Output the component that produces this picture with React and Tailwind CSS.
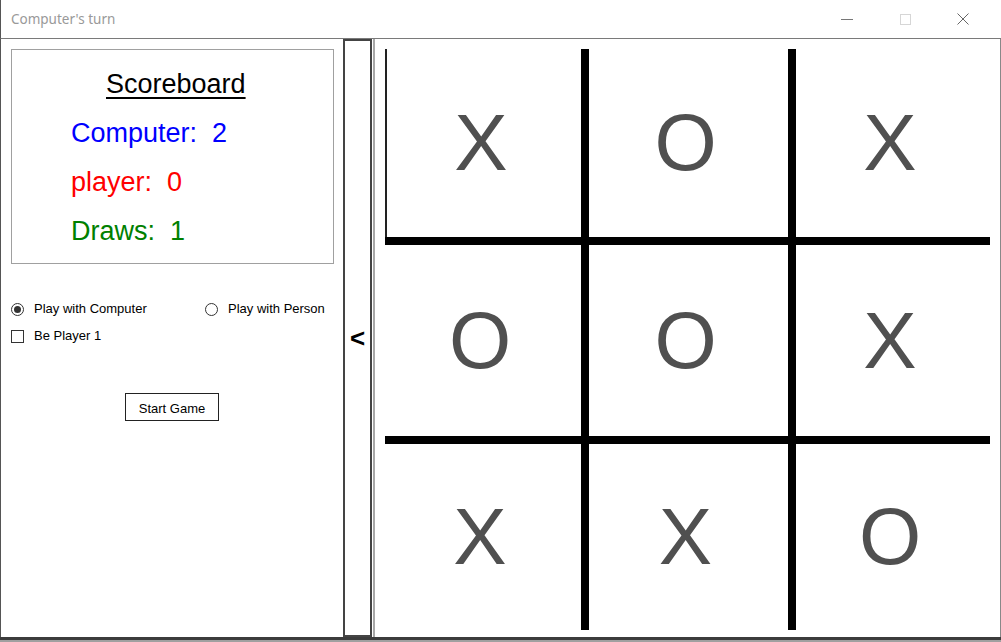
import React from "react";

const board = [
  ["X", "O", "X"],
  ["O", "O", "X"],
  ["X", "X", "O"],
];

const Radio = ({ checked }) => (
  <span className="w-[13px] h-[13px] rounded-full border border-[#333] bg-white flex items-center justify-center shrink-0">
    {checked && <span className="w-[7px] h-[7px] rounded-full bg-[#333]"></span>}
  </span>
);

const App = () => {
  return (
    <div
      className="w-[1001px] h-[642px] bg-white flex flex-col overflow-hidden"
      style={{ fontFamily: '"Liberation Sans", Arial, sans-serif' }}
    >
      {/* title bar */}
      <div className="h-[39px] shrink-0 flex items-center border-b border-[#7a7a7a] border-l border-l-[#555]">
        <span
          className="pl-[10px] text-[13.5px] text-[#999] flex-1"
          style={{ fontFamily: '"Noto Sans", sans-serif' }}
        >
          Computer's turn
        </span>
        <div className="flex items-center h-full">
          <div className="w-[58px] flex justify-center">
            <span className="w-[12px] h-px bg-[#777]"></span>
          </div>
          <div className="w-[58px] flex justify-center">
            <span className="w-[11px] h-[11px] border border-[#d6d6d6]"></span>
          </div>
          <div className="w-[58px] flex justify-center">
            <svg width="12" height="12" viewBox="0 0 12 12">
              <path d="M0.5 0.5 L11.5 11.5 M11.5 0.5 L0.5 11.5" stroke="#666" strokeWidth="1" />
            </svg>
          </div>
          <div className="w-[9px]"></div>
        </div>
      </div>

      {/* main */}
      <div className="flex h-[598px] border-l border-[#555]">
        {/* left panel */}
        <div className="w-[342px] shrink-0 pl-[10px] pt-[10px] pr-[9px]">
          <div className="border border-[#a0a0a0] h-[215px] pt-[19px] flex flex-col gap-[18px] text-[27px] leading-[31px]">
            <div className="pl-[94px] text-black underline decoration-2 underline-offset-[4px]">Scoreboard</div>
            <div className="pl-[59px] text-[#0000ff]">Computer:&nbsp; 2</div>
            <div className="pl-[59px] text-[#ff0000]">player:&nbsp; 0</div>
            <div className="pl-[59px] text-[#008000]">Draws:&nbsp; 1</div>
          </div>

          <div className="mt-[37px] flex items-center h-[16px] text-[13px] text-black">
            <div className="w-[194px] flex items-center gap-[10px]">
              <Radio checked />
              <span>Play with Computer</span>
            </div>
            <div className="flex items-center gap-[10px]">
              <Radio />
              <span>Play with Person</span>
            </div>
          </div>

          <div className="mt-[11px] flex items-center h-[16px] gap-[10px] text-[13px] text-black">
            <span className="w-[13px] h-[13px] border border-[#333] bg-white shrink-0"></span>
            <span>Be Player 1</span>
          </div>

          <div className="mt-[49px] flex justify-center pr-[1px]">
            <button className="w-[94px] h-[28px] pt-[3px] border border-[#222] bg-white text-[13px] text-black">
              Start Game
            </button>
          </div>
        </div>

        {/* collapse button */}
        <button className="w-[29px] shrink-0 h-[598px] border-2 border-[#444] bg-white flex items-center justify-center text-[26px] font-bold text-black">
          &lt;
        </button>

        {/* board panel */}
        <div className="ml-[1px] flex-1 border-l-2 border-[#a8a8a8] border-r border-r-[#888] pl-[10px] pt-[10px]">
          <div className="grid grid-cols-[196px_199px_194px] grid-rows-[188px_191px_186px] gap-[8px] bg-black w-[605px] h-[581px]">
            {board.flat().map((v, i) => (
              <div
                key={i}
                className={
                  "bg-white flex items-center justify-center pr-[6px] text-[80px] leading-none text-[#505050]" +
                  (i === 0 ? " border-l-2 border-[#222]" : "")
                }
              >
                {v}
              </div>
            ))}
          </div>
        </div>
      </div>

      {/* bottom window border */}
      <div className="h-[3px] bg-[#3c3c3c] shrink-0"></div>
      <div className="h-[2px] bg-[#a0a0a0] shrink-0"></div>
    </div>
  );
};

export default App;
